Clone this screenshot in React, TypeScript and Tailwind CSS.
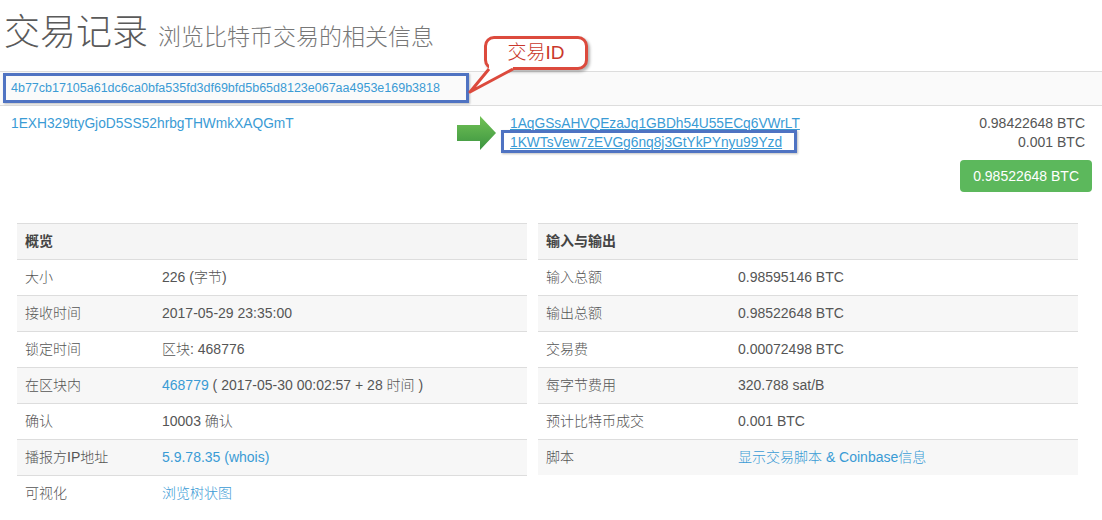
import React from "react";

const link = "text-[#3a9bd5]";

const overview: { label: string; value: React.ReactNode }[] = [
  { label: "大小", value: "226 (字节)" },
  { label: "接收时间", value: "2017-05-29 23:35:00" },
  { label: "锁定时间", value: "区块: 468776" },
  {
    label: "在区块内",
    value: (
      <>
        <span className={link}>468779</span> ( 2017-05-30 00:02:57 + 28 时间 )
      </>
    ),
  },
  { label: "确认", value: "10003 确认" },
  { label: "播报方IP地址", value: <span className={link}>5.9.78.35 (whois)</span> },
  { label: "可视化", value: <span className={link}>浏览树状图</span> },
];

const io: { label: string; value: React.ReactNode }[] = [
  { label: "输入总额", value: "0.98595146 BTC" },
  { label: "输出总额", value: "0.98522648 BTC" },
  { label: "交易费", value: "0.00072498 BTC" },
  { label: "每字节费用", value: "320.788 sat/B" },
  { label: "预计比特币成交", value: "0.001 BTC" },
  { label: "脚本", value: <span className={link}>显示交易脚本 &amp; Coinbase信息</span> },
];

function InfoTable({
  title,
  rows,
  labelWidth,
  width,
}: {
  title: string;
  rows: { label: string; value: React.ReactNode }[];
  labelWidth: string;
  width: string;
}) {
  return (
    <div className={width}>
      <div className="h-[36px] border-t border-[#dddddd] bg-[#f5f5f5] flex items-center pl-[8px] font-bold text-[#444]">
        {title}
      </div>
      {rows.map((r, i) => (
        <div
          key={r.label}
          className={`h-[36px] border-t border-[#dddddd] flex items-center font-light ${i % 2 === 1 ? "bg-[#f7f7f7]" : "bg-white"}`}
        >
          <div className={`${labelWidth} pl-[8px]`}>{r.label}</div>
          <div>{r.value}</div>
        </div>
      ))}
    </div>
  );
}

export default function App() {
  return (
    <div className="relative w-[1102px] h-[520px] overflow-hidden bg-white text-[14px] text-[#555] font-['Liberation_Sans','Noto_Sans_CJK_SC',sans-serif]">
      {/* heading */}
      <div className="h-[71px] pt-[13px] pl-[4px] flex items-baseline gap-[10px] font-light">
        <span className="text-[36px] leading-[40px] text-[#5a5a5a]">交易记录</span>
        <span className="text-[23px] text-[#777]">浏览比特币交易的相关信息</span>
      </div>

      {/* tx hash row */}
      <div className="relative h-[35px] border-y border-[#dddddd] bg-[#fafafa] flex items-center pl-[11px]">
        <span className={`text-[12.5px] ${link}`}>
          4b77cb17105a61dc6ca0bfa535fd3df69bfd5b65d8123e067aa4953e169b3818
        </span>
        <div className="absolute left-[3px] top-[1px] w-[466px] h-[30px] border-[3px] border-[#4f73c2] shadow-[1px_1px_2px_rgba(0,0,0,0.25)]" />
      </div>

      {/* callout */}
      <svg className="absolute left-[466px] top-[60px] z-20" width="56" height="36" viewBox="0 0 56 36">
        <polygon points="23,4 47,4 47,9 4,32 23,9" fill="#fff" />
        <polyline points="23,9 4,32 47,9" fill="none" stroke="#dc4a3d" strokeWidth="3" strokeLinejoin="round" />
      </svg>
      <div className="absolute left-[484px] top-[36px] z-10 w-[104px] h-[34px] rounded-[10px] border-[3px] border-[#dc4a3d] bg-white shadow-[2px_2px_3px_rgba(0,0,0,0.3)] flex items-center justify-center text-[19px] text-[#c9372c] font-light">
        交易ID
      </div>

      {/* inputs / outputs */}
      <div className="flex pt-[8px] leading-[19px]">
        <div className={`w-[446px] pl-[11px] text-[13.75px] ${link}`}>1EXH329ttyGjoD5SS52hrbgTHWmkXAQGmT</div>
        <div className="w-[64px]">
          <svg className="mt-[2px] ml-[11px]" width="40" height="35" viewBox="0 0 40 35">
            <defs>
              <linearGradient id="ga" x1="0" y1="0" x2="0" y2="1">
                <stop offset="0" stopColor="#72c256" />
                <stop offset="1" stopColor="#3b9440" />
              </linearGradient>
            </defs>
            <polygon points="0,9 23,9 23,0 39,17 23,34 23,25 0,25" fill="url(#ga)" />
          </svg>
        </div>
        <div className="relative flex-1 flex flex-col text-[13.75px]">
          <span className={`${link} underline`}>1AqGSsAHVQEzaJq1GBDh54U55ECq6VWrLT</span>
          <span className={`${link} underline`}>1KWTsVew7zEVGg6nq8j3GtYkPYnyu99Yzd</span>
          <div className="absolute left-[-9px] top-[16px] w-[296px] h-[23px] border-[3px] border-[#4f73c2] shadow-[1px_1px_2px_rgba(0,0,0,0.25)]" />
        </div>
        <div className="flex flex-col items-end pr-[17px]">
          <span>0.98422648 BTC</span>
          <span>0.001 BTC</span>
        </div>
      </div>
      <div className="flex justify-end pr-[10px] mt-[8px]">
        <div className="h-[32px] px-[13px] rounded-[4px] bg-[#5cb85c] text-white flex items-center">
          0.98522648 BTC
        </div>
      </div>

      {/* tables */}
      <div className="flex pl-[17px] gap-[11px] mt-[31px]">
        <InfoTable title="概览" rows={overview} labelWidth="w-[145px]" width="w-[510px]" />
        <InfoTable title="输入与输出" rows={io} labelWidth="w-[200px]" width="w-[540px]" />
      </div>
    </div>
  );
}
